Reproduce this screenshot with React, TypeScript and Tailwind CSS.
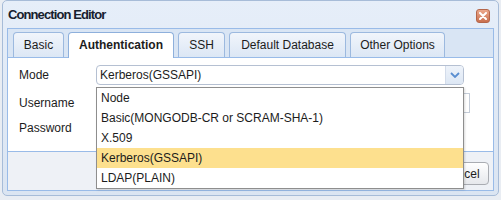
import React from "react";

const tabs = [
  { label: "Basic", w: "w-[51px]" },
  { label: "Authentication", w: "w-[106px]", active: true },
  { label: "SSH", w: "w-[47px]" },
  { label: "Default Database", w: "w-[117px]" },
  { label: "Other Options", w: "w-[95px]" },
];

const modes = [
  "Node",
  "Basic(MONGODB-CR or SCRAM-SHA-1)",
  "X.509",
  "Kerberos(GSSAPI)",
  "LDAP(PLAIN)",
];

function CloseButton() {
  return (
    <div className="w-[14px] h-[14px] rounded-[3px] border border-[#b4664a] bg-gradient-to-b from-[#eba88c] to-[#c9704f] flex items-center justify-center">
      <svg width="8" height="8" viewBox="0 0 8 8">
        <path d="M1 1 L7 7 M7 1 L1 7" stroke="#fff" strokeWidth="2" strokeLinecap="round" />
      </svg>
    </div>
  );
}

function Chevron() {
  return (
    <svg width="10" height="6" viewBox="0 0 10 6">
      <path d="M1 1 L5 5 L9 1" fill="none" stroke="#5a8ed0" strokeWidth="1.8" />
    </svg>
  );
}

export default function App() {
  return (
    <div className="w-[501px] h-[200px] bg-[#e9edf3] relative font-['Liberation_Sans',Arial,sans-serif] text-[12px] text-[#1c1c1c] overflow-hidden">
      {/* Window */}
      <div className="absolute left-[2px] top-0 w-[497px] h-[196px] border border-[#a7bcd8] rounded-[5px] bg-gradient-to-b from-[#e6eef9] to-[#dbe5f2] px-[4px] pb-[4px] flex flex-col">
        {/* Title */}
        <div className="h-[27px] flex items-center justify-between pl-[1px] pr-[4px] pt-[1px]">
          <span className="text-[13px] font-bold tracking-[-0.9px] text-[#16202e]">Connection Editor</span>
          <div className="mt-[1px]">
            <CloseButton />
          </div>
        </div>

        {/* Body */}
        <div className="flex-1 border border-[#99bbe8] bg-[#eef1f6] flex flex-col">
          {/* Tab strip */}
          <div className="h-[29px] bg-[#d9e5f4] border-b border-[#99bbe8] flex items-end gap-[4px] pl-[5px]">
            {tabs.map((t) =>
              t.active ? (
                <div
                  key={t.label}
                  className={`${t.w} h-[26px] -mb-px relative rounded-t-[4px] border border-b-0 border-[#8eb0dc] bg-white flex items-center justify-center font-bold pb-[2px]`}
                >
                  {t.label}
                </div>
              ) : (
                <div
                  key={t.label}
                  className={`${t.w} h-[25px] rounded-t-[4px] border border-b-0 border-[#9cb9df] bg-gradient-to-b from-[#f1f5fb] to-[#dce7f5] flex items-center justify-center pb-[1px]`}
                >
                  {t.label}
                </div>
              )
            )}
          </div>

          {/* Content */}
          <div className="h-[94px] bg-white border-b border-[#99bbe8] pt-[7px] pl-[11px] flex flex-col">
            <div className="flex items-center h-[20px]">
              <span className="w-[77px]">Mode</span>
              <div className="w-[368px] h-[20px] border border-[#b5c0d2] rounded-[4px] flex items-center justify-between overflow-hidden">
                <span className="pl-[3px]">Kerberos(GSSAPI)</span>
                <div className="w-[18px] h-full bg-gradient-to-b from-[#eef3fa] to-[#dde7f4] border-l border-[#d3dcea] flex items-center justify-center">
                  <Chevron />
                </div>
              </div>
            </div>
            <div className="flex items-center h-[20px] mt-[8px]">
              <span className="w-[77px]">Username</span>
              <div className="w-[374px] h-[20px] border border-[#c4ccd8]" />
            </div>
            <div className="flex items-center h-[20px] mt-[5px]">
              <span className="w-[77px]">Password</span>
              <div className="w-[300px] h-[20px] border border-[#c4ccd8]" />
            </div>
          </div>

          {/* Footer */}
          <div className="flex-1 flex items-start justify-end gap-[6px] pt-[10px] pr-[4px]">
            <div className="w-[56px] h-[23px] rounded-[4px] border border-[#a9acb2] bg-gradient-to-b from-white to-[#e6e8ec] flex items-center justify-center">
              OK
            </div>
            <div className="w-[56px] h-[23px] rounded-[4px] border border-[#a9acb2] bg-gradient-to-b from-white to-[#e6e8ec] flex items-center justify-center">
              Cancel
            </div>
          </div>
        </div>
      </div>

      {/* Dropdown list */}
      <div className="absolute left-[96px] top-[87px] w-[368px] border border-[#8e8e8e] bg-white shadow-[1px_1px_2px_rgba(0,0,0,0.15)]">
        {modes.map((m, i) => (
          <div
            key={m}
            className={`h-[20px] flex items-center pl-[4px] ${i === 3 ? "bg-[#fde08e]" : ""}`}
          >
            {m}
          </div>
        ))}
      </div>
    </div>
  );
}
